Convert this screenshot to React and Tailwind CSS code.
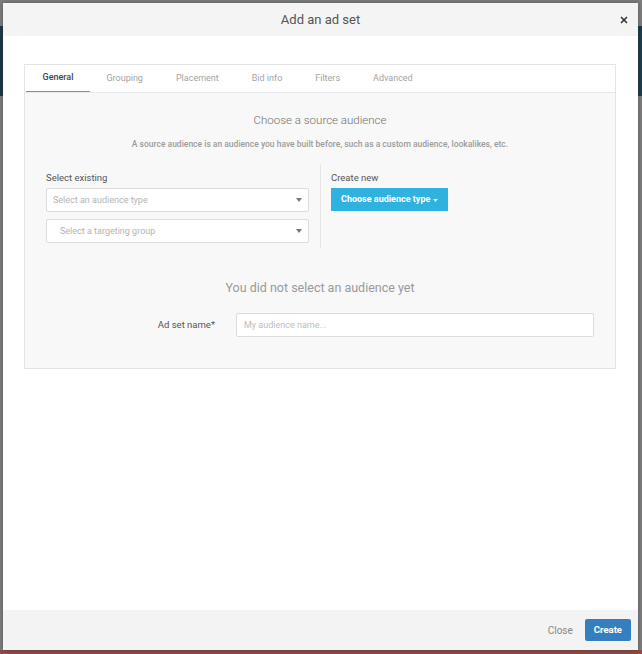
import { X } from 'lucide-react';

const tabs = ['General', 'Grouping', 'Placement', 'Bid info', 'Filters', 'Advanced'];

function Caret({ className = '' }) {
  return (
    <svg width="6" height="4" viewBox="0 0 6 4" className={className}>
      <path d="M0 0h6L3 4z" fill="currentColor" />
    </svg>
  );
}

function SelectBox({ placeholder, indent }) {
  return (
    <div className="flex h-[24px] items-center justify-between rounded-[2px] border border-[#dcdcdc] bg-white pr-[6px]">
      <span className={`${indent} text-[9px] text-[#b4b4b4]`}>{placeholder}</span>
      <Caret className="text-[#777]" />
    </div>
  );
}

export default function App() {
  return (
    <div
      className="h-[654px] w-[642px] overflow-hidden bg-[linear-gradient(to_bottom,#7c7c7c_0px,#7c7c7c_26px,#1f3a48_26px,#1f3a48_96px,#7c7c7c_96px,#7c7c7c_650px,#8d4b4b_650px)] pt-[3px] pl-[3px]"
      style={{ fontFamily: 'Roboto, "Liberation Sans", sans-serif' }}
    >
      <div className="flex h-[647px] w-[635px] flex-col bg-white shadow-[0_0_4px_rgba(0,0,0,0.3)]">
        {/* header */}
        <div className="relative flex h-[33px] items-center justify-center bg-[#f4f4f4]">
          <h1 className="text-[13px] text-[#555]">Add an ad set</h1>
          <X className="absolute right-[9px] top-[12px] h-[10px] w-[10px] text-[#333]" strokeWidth={4} />
        </div>

        {/* body */}
        <div className="flex-1 pt-[28px] pl-[21px] pr-[22px]">
          <div className="border border-[#e4e4e4]">
            <div className="flex h-[28px] items-stretch border-b border-[#e8e8e8] bg-white pl-[1px]">
              {tabs.map((tab, i) => (
                <div
                  key={tab}
                  className={
                    i === 0
                      ? 'flex items-center border-b-[1.5px] border-[#5b9bd1] px-[16.5px] text-[9px] font-medium text-[#444]'
                      : 'flex items-center px-[16.5px] text-[9px] text-[#a3a3a3]'
                  }
                >
                  {tab}
                </div>
              ))}
            </div>

            <div className="bg-[#f8f8f8] px-[21px] pb-[31px]">
              <div className="pt-[19px] text-center text-[11.5px] font-light text-[#6f6f6f]">Choose a source audience</div>
              <div className="mt-[9px] text-center text-[8.5px] font-medium text-[#9c9c9c]">
                A source audience is an audience you have built before, such as a custom audience, lookalikes, etc.
              </div>

              <div className="mt-[13px] flex">
                <div className="w-[274px] pr-[11px] pt-[7px] pb-[5px]">
                  <div className="text-[9.5px] text-[#555]">Select existing</div>
                  <div className="mt-[3px] flex flex-col gap-[7px]">
                    <SelectBox placeholder="Select an audience type" indent="pl-[6px]" />
                    <SelectBox placeholder="Select a targeting group" indent="pl-[13px]" />
                  </div>
                </div>
                <div className="flex-1 border-l border-[#e6e6e6] pl-[10px] pt-[7px]">
                  <div className="text-[9.5px] text-[#555]">Create new</div>
                  <button
                    type="button"
                    className="mt-[3px] flex h-[23px] items-center gap-[3px] bg-[#2fb2de] px-[10px] text-[9px] font-bold text-white"
                  >
                    Choose audience type
                    <Caret className="mt-[1px] h-[3px] w-[5px]" />
                  </button>
                </div>
              </div>

              <div className="mt-[31px] text-center text-[12.5px] text-[#9a9a9a]">You did not select an audience yet</div>

              <div className="mt-[15px] flex items-center">
                <div className="w-[169px] text-right text-[9.5px] text-[#555]">Ad set name*</div>
                <input
                  type="text"
                  placeholder="My audience name..."
                  className="ml-[21px] h-[24px] flex-1 rounded-[2px] border border-[#dcdcdc] bg-white px-[7px] text-[9px] text-[#555] outline-none placeholder:text-[#bdbdbd]"
                />
              </div>
            </div>
          </div>
        </div>

        {/* footer */}
        <div className="flex h-[40px] items-center justify-end gap-[12px] bg-[#f3f3f3] pr-[7px]">
          <button type="button" className="text-[10px] text-[#888]">Close</button>
          <button type="button" className="h-[22px] rounded-[2px] bg-[#357fbf] px-[9px] text-[9.5px] font-bold text-white">
            Create
          </button>
        </div>
      </div>
    </div>
  );
}
